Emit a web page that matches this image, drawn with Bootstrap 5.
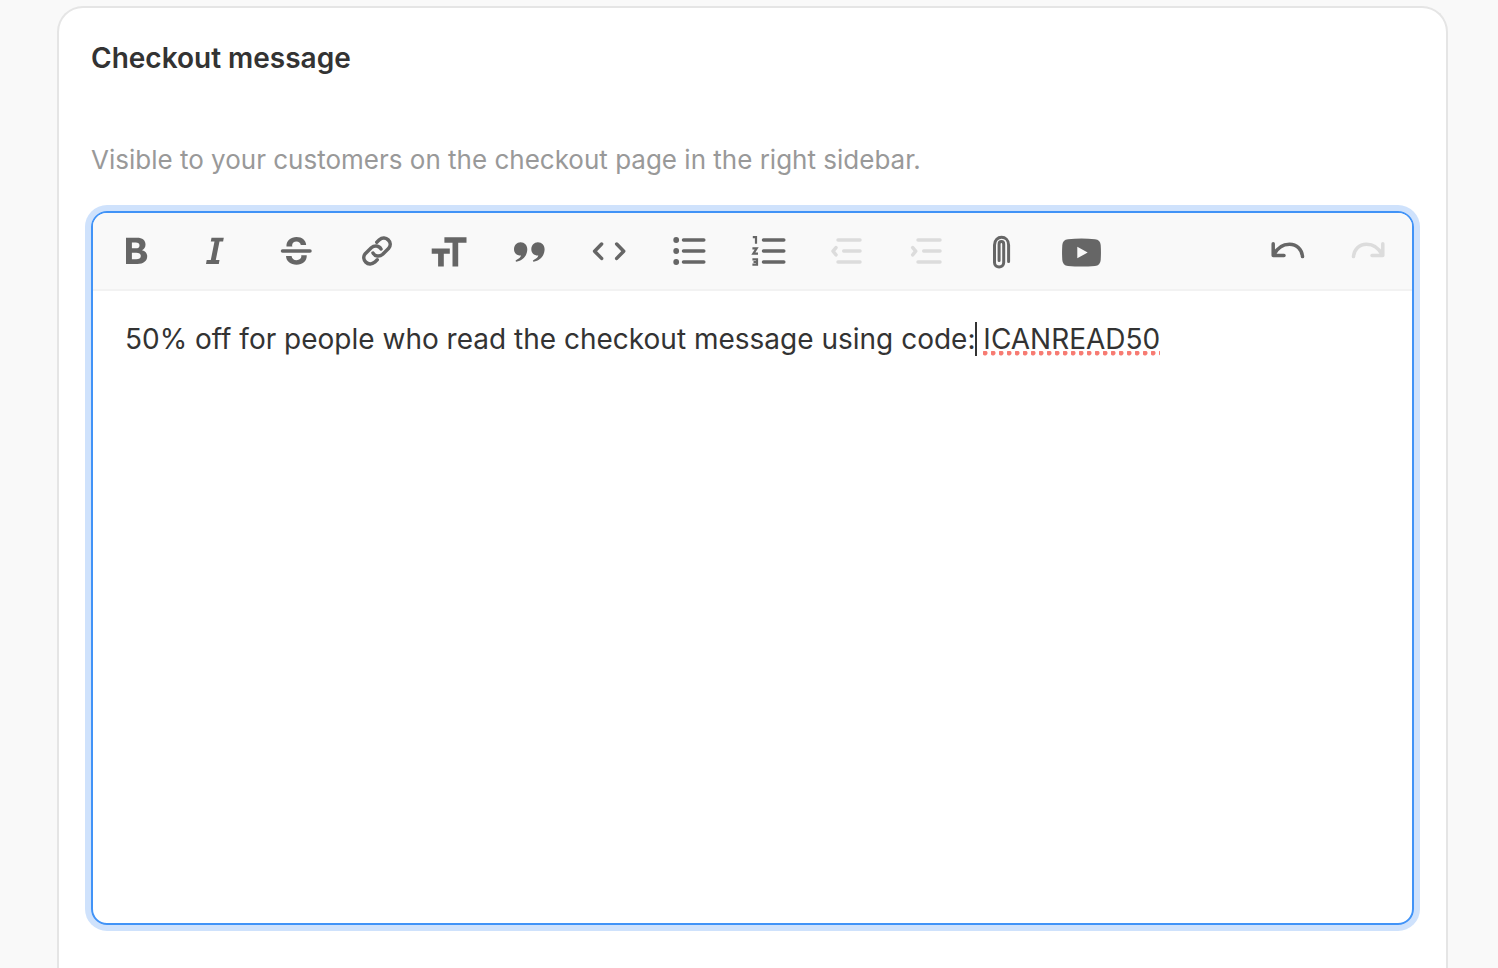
<!DOCTYPE html>
<html lang="en">
<head>
<meta charset="utf-8">
<meta name="viewport" content="width=device-width, initial-scale=1">
<title>Checkout message</title>
<link href="https://cdn.jsdelivr.net/npm/bootstrap@5.3.0/dist/css/bootstrap.min.css" rel="stylesheet">
<style>
  body { background: #f9f9f9; color: #333; font-family: Inter, "Liberation Sans", sans-serif; font-size: 28px; line-height: 40px; }
  .page-wrap { padding: 6px 50px 0 57px; }
  .settings-card { border: 2px solid #e5e5e5; border-bottom: 0; border-radius: 26px 26px 0 0; padding: 30px 32px 43px; --bs-card-color: #333; }
  .settings-title { font-size: 28px; line-height: 40px; font-weight: 600; margin-bottom: 64px; }
  .settings-hint { font-size: 26px; line-height: 36px; color: #999; margin-bottom: 33px; }
  .editor { border: 2px solid #4193f7; border-radius: 16px; box-shadow: 0 0 0 6px #cfe2fc; }
  .editor-toolbar { background: #f9f9f9; border-bottom: 2px solid #f2f2f2; border-radius: 14px 14px 0 0; padding: 8px; }
  .tool-group { gap: 8px; }
  .tool-btn { width: 72px; height: 60px; padding: 0; border: 0; color: #666; display: flex; align-items: center; justify-content: center; }
  .tool-btn:disabled { color: #dcdcdc; opacity: 1; border: 0; }
  .tool-btn svg { width: 40px; height: 40px; fill: none; stroke: currentColor; stroke-width: 3.5; stroke-linecap: round; stroke-linejoin: round; flex: none; }
  .tool-btn .solid { fill: currentColor; stroke: none; }
  .editor-body { min-height: 632px; padding: 28px 32px; outline: 0; }
  .caret { position: relative; }
  .caret::after { content: ""; position: absolute; left: 0; top: 0; width: 2px; height: 34px; background: #333; }
  .misspelt { background: radial-gradient(circle at 2px 2px, #f77b72 0, #f77b72 2px, transparent 3px) left bottom / 8px 5px repeat-x; }
</style>
</head>
<body>
<main class="page-wrap">
  <section class="card settings-card">
    <h2 class="settings-title" id="msg-title">Checkout message</h2>
    <p class="settings-hint" id="msg-hint">Visible to your customers on the checkout page in the right sidebar.</p>
    <div class="editor">
      <div class="editor-toolbar d-flex justify-content-between" role="toolbar" aria-label="Formatting">
        <div class="d-flex">
          <div class="tool-group d-flex">
            <button type="button" class="btn tool-btn" aria-label="Bold"><svg viewBox="0 0 40 40"><path class="solid" fill-rule="evenodd" d="M9 6.700H20C25.500 6.700 28.500 9.300 28.500 13.600C28.500 16.300 27.200 18.300 25 19.300C28.200 20.200 30.200 22.300 30.200 25.300C30.200 30 26.500 33 20.500 33H9ZM14.900 11.600V17.300H18.700C21.200 17.300 22.500 16.300 22.500 14.400S21.200 11.600 18.700 11.600ZM14.900 21.800V28.200H19.200C22 28.200 23.800 27.200 23.800 25S22 21.800 19.200 21.800Z"/></svg></button>
            <button type="button" class="btn tool-btn" aria-label="Italic"><svg viewBox="0 0 40 40"><path class="solid" d="M14.500 6.700H26.800L26.100 10.500H22.500L18.800 29H22.500L21.800 33H9L9.700 29H13.800L17.500 10.500H13.800Z"/></svg></button>
            <button type="button" class="btn tool-btn" aria-label="Strikethrough"><svg viewBox="0 0 40 40"><path d="M5.500 20H33"/><path class="solid" d="M9.500 15.600C9 10 13.500 6 19.500 6C25.300 6 28.800 9.300 29.200 14H23.800C23.400 11.700 21.800 10.500 19.500 10.500C16.500 10.500 14.300 12.800 15.400 15.600ZM9 25H14.600C14.800 27.700 16.700 29.200 19.600 29.200C22.800 29.200 25 27 24.200 24.200H29.700C30.200 29.700 26 33.700 19.600 33.700C13.300 33.700 9.300 30.400 9 25Z"/></svg></button>
            <button type="button" class="btn tool-btn" aria-label="Link"><svg viewBox="0 0 40 40"><path d="M19.800 11.200L22.300 8.800C28.500 3.500 36.800 11.400 31.500 17.600L25.700 23.200C22.500 26 18 25.500 16 22"/><path d="M20.200 28.800L17.700 31.200C11.500 36.500 3.200 28.600 8.500 22.400L14.300 16.800C17.500 14 22 14.500 24 18"/></svg></button>
          </div>
          <div class="tool-group d-flex">
            <button type="button" class="btn tool-btn" aria-label="Heading"><svg viewBox="0 0 40 40"><path class="solid" d="M15.400 6.300H37.500V11.700H29.200V35.600H23.500V11.700H15.400ZM2.700 17.500H20.800V22.800H14.800V35.600H9.100V22.800H2.700Z"/></svg></button>
            <button type="button" class="btn tool-btn" aria-label="Quote"><svg viewBox="0 0 40 40"><path class="solid" d="M11.600 11.300C15.500 11.300 18.300 14.200 18.300 18.200C18.300 24.500 14 29.500 7.300 30.700C6.300 30.300 6.300 29.400 7.300 28.900C10.500 27.300 11.800 26 12 24.500C7.800 24.800 5 22 5 18.200C5 14.200 7.800 11.300 11.600 11.300ZM28.900 11.300C32.800 11.300 35.600 14.200 35.600 18.200C35.600 24.500 31.300 29.500 24.600 30.700C23.600 30.300 23.600 29.400 24.600 28.900C27.800 27.300 29.100 26 29.300 24.500C25.100 24.800 22.300 22 22.300 18.200C22.300 14.200 25.100 11.300 28.900 11.300Z"/></svg></button>
            <button type="button" class="btn tool-btn" aria-label="Code"><svg viewBox="0 0 40 40"><path d="M12.600 13L5.600 20.200L12.600 27.400M27.700 13L34.700 20.200L27.700 27.400"/></svg></button>
            <button type="button" class="btn tool-btn" aria-label="Bullets"><svg viewBox="0 0 40 40"><path d="M14.500 9H34.800M14.500 20H34.800M14.500 31H34.800"/><g class="solid"><circle cx="7.200" cy="9" r="2.900"/><circle cx="7.200" cy="20" r="2.900"/><circle cx="7.200" cy="31" r="2.900"/></g></svg></button>
            <button type="button" class="btn tool-btn" aria-label="Numbers"><svg viewBox="0 0 40 40"><path d="M14.500 9H34.800M14.500 20H34.800M14.500 31H34.800"/><path stroke-width="2.200" stroke-linecap="butt" stroke-linejoin="miter" d="M3.800 6.200H7V12.700M3.400 17.300H7.700L4.300 22.700H9M3.400 28.300H8V33.700H3.400M4.500 31H8"/></svg></button>
            <button type="button" class="btn tool-btn" aria-label="Decrease level" disabled><svg viewBox="0 0 40 40"><path d="M9 9H31M14.700 20H31M9 31H31M7 16.600L4 20.200L7 23.800"/></svg></button>
            <button type="button" class="btn tool-btn" aria-label="Increase level" disabled><svg viewBox="0 0 40 40"><path d="M9 9H31M14.700 20H31M9 31H31M3.700 16.600L6.700 20.200L3.700 23.800"/></svg></button>
          </div>
          <div class="tool-group d-flex">
            <button type="button" class="btn tool-btn" aria-label="Attach files"><svg viewBox="0 0 40 40"><path stroke-width="3" d="M27.600 30.500V14C27.600 3.700 13.500 3.700 13.500 14V31.500C13.500 37.500 22.700 37.500 22.700 31.500V13.300C22.700 9.700 18.100 9.700 18.100 13.300V29.500"/></svg></button>
            <button type="button" class="btn tool-btn" aria-label="Embed video"><svg viewBox="0 0 40 40"><path class="solid" fill-rule="evenodd" d="M7 8.200Q20.500 7 34 8.200Q39.300 8.600 39.700 14Q40.200 21.500 39.700 29Q39.300 34.600 34 35Q20.500 36.100 7 35Q1.700 34.600 1.300 29Q.800 21.500 1.300 14Q1.700 8.600 7 8.200ZM16.300 15.700V27.300L26.700 21.500Z"/></svg></button>
          </div>
        </div>
        <div class="tool-group d-flex">
          <button type="button" class="btn tool-btn" aria-label="Undo"><svg viewBox="0 0 40 40"><path d="M5.200 12.800V24.500H16M5.800 23.800C9 17.500 14.500 13.300 21.500 13.300C29 13.300 33.800 18.500 34.500 25.500"/></svg></button>
          <button type="button" class="btn tool-btn" aria-label="Redo" disabled><svg viewBox="0 0 40 40"><path d="M34.800 12.800V24.500H24M34.200 23.800C31 17.500 25.500 13.300 18.500 13.300C11 13.300 6.200 18.500 5.500 25.500"/></svg></button>
        </div>
      </div>
      <div class="editor-body" contenteditable="true" role="textbox" aria-multiline="true" aria-labelledby="msg-title" aria-describedby="msg-hint" spellcheck="false">50% off for people who read the checkout message using code:<span class="caret"></span> <span class="misspelt">ICANREAD50</span></div>
    </div>
  </section>
</main>
<script src="https://cdn.jsdelivr.net/npm/bootstrap@5.3.0/dist/js/bootstrap.bundle.min.js"></script>
</body>
</html>
